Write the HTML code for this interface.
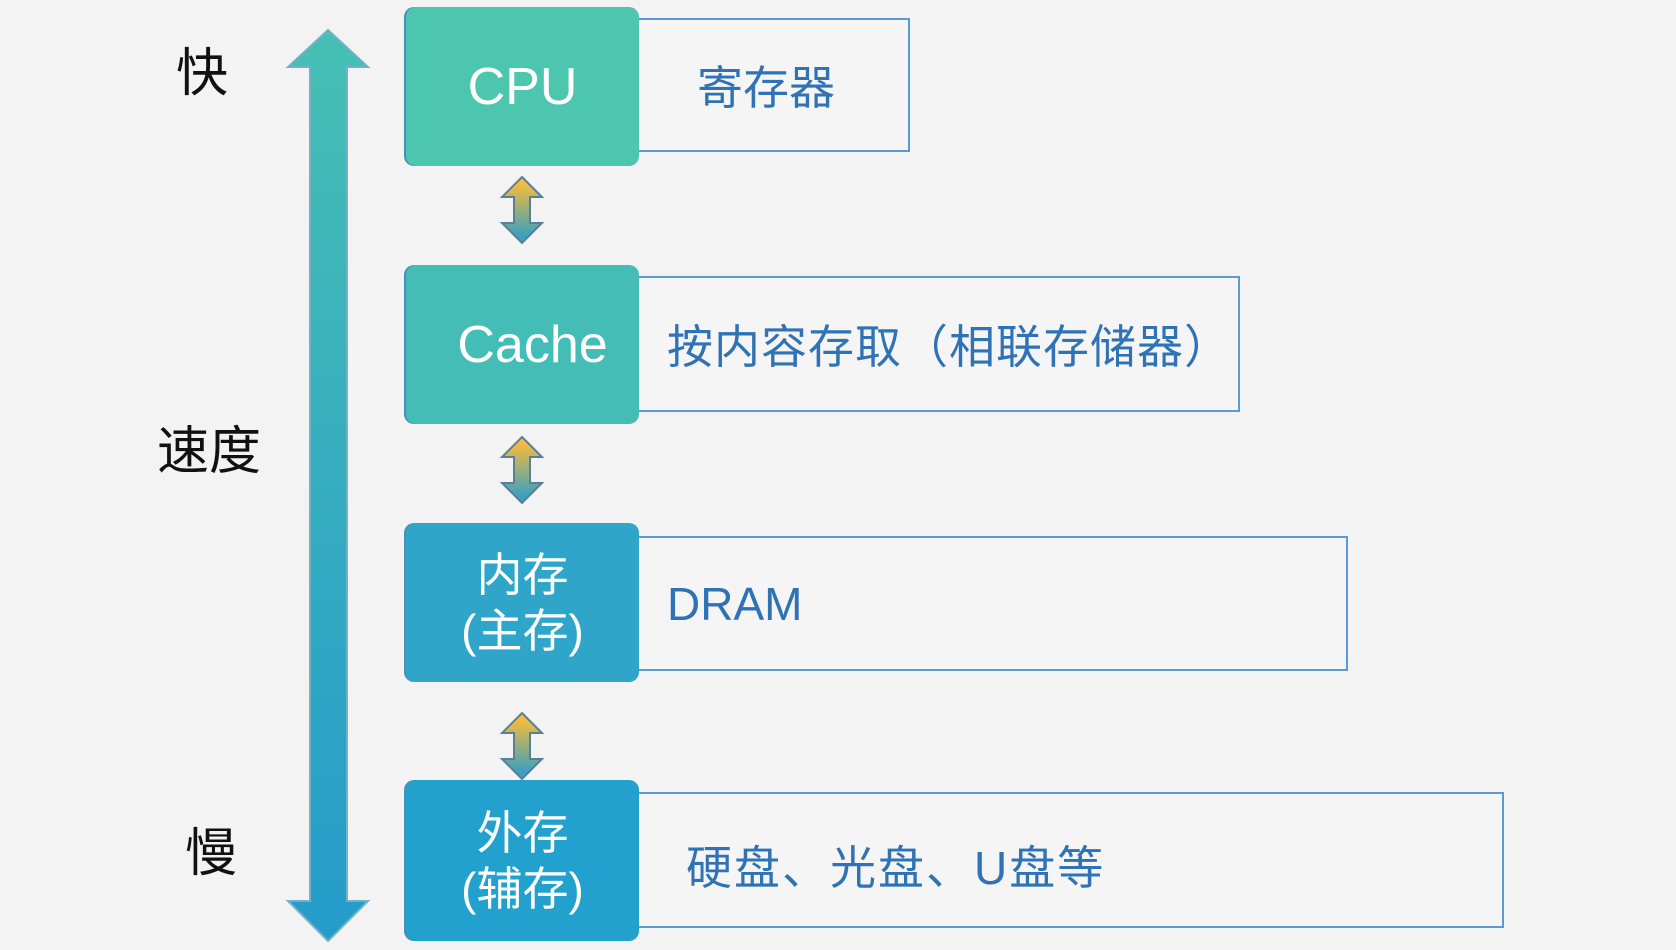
<!DOCTYPE html>
<html><head><meta charset="utf-8"><style>
body{margin:0;width:1676px;height:950px;background:#f3f3f3;overflow:hidden;position:relative;font-family:"Liberation Sans","Noto Sans CJK SC",sans-serif}
.l{position:absolute;color:#111;font-size:52px;line-height:1}
.b{position:absolute;left:406px;width:233px;border-radius:10px;color:#fff;display:flex;align-items:center;justify-content:center;text-align:center;box-shadow:-2px 0 0 #4a8fb8}
.r{position:absolute;left:639px;border:2px solid #5b9bd5;border-left:none;background:#f5f5f5;color:#2f72b5;font-size:46px;display:flex;align-items:center;box-sizing:border-box}
svg{position:absolute}
</style></head><body>
<div class="l" style="left:176px;top:48px">快</div>
<div class="l" style="left:157px;top:426px">速度</div>
<div class="l" style="left:185px;top:828px">慢</div>
<svg style="left:280px;top:25px" width="100" height="925">
<defs><linearGradient id="g" x1="0" y1="0" x2="0" y2="1"><stop offset="0" stop-color="#46bfb4"/><stop offset="1" stop-color="#259bcb"/></linearGradient></defs>
<path d="M48 5 L88 42 L67 42 L67 876 L88 876 L48 916 L8 876 L30 876 L30 42 L8 42 Z" fill="url(#g)" stroke="#6fb3c6" stroke-width="2"/>
</svg>
<div class="r" style="top:18px;width:271px;height:134px;padding-left:58px">寄存器</div>
<div class="b" style="top:7px;height:159px;background:#4cc6af;font-size:52px">CPU</div>
<div class="r" style="top:276px;width:601px;height:136px;padding-left:28px;letter-spacing:1px">按内容存取（相联存储器）</div>
<div class="b" style="top:265px;height:159px;background:#44bdb7;font-size:52px;padding-left:20px;box-sizing:border-box">Cache</div>
<div class="r" style="top:536px;width:709px;height:135px;padding-left:28px">DRAM</div>
<div class="b" style="top:523px;height:159px;background:#2fa6c9;font-size:46px;line-height:56px">内存<br>(主存)</div>
<div class="r" style="top:792px;width:865px;height:136px;padding-left:47px;padding-top:10px;letter-spacing:2px">硬盘、光盘、U盘等</div>
<div class="b" style="top:780px;height:161px;background:#22a1cf;font-size:46px;line-height:56px">外存<br>(辅存)</div>
<svg width="0" height="0"><defs><linearGradient id="s" x1="0" y1="0" x2="0" y2="1"><stop offset="0.1" stop-color="#f5bc3c"/><stop offset="0.9" stop-color="#3aa0c0"/></linearGradient></defs></svg>
<svg style="left:498px;top:175px" width="48" height="70"><path d="M24 2 L44 22 L32 22 L32 48 L44 48 L24 68 L4 48 L16 48 L16 22 L4 22 Z" fill="url(#s)" stroke="#5a7f96" stroke-width="2"/></svg>
<svg style="left:498px;top:435px" width="48" height="70"><path d="M24 2 L44 22 L32 22 L32 48 L44 48 L24 68 L4 48 L16 48 L16 22 L4 22 Z" fill="url(#s)" stroke="#5a7f96" stroke-width="2"/></svg>
<svg style="left:498px;top:711px" width="48" height="70"><path d="M24 2 L44 22 L32 22 L32 48 L44 48 L24 68 L4 48 L16 48 L16 22 L4 22 Z" fill="url(#s)" stroke="#5a7f96" stroke-width="2"/></svg>
</body></html>
